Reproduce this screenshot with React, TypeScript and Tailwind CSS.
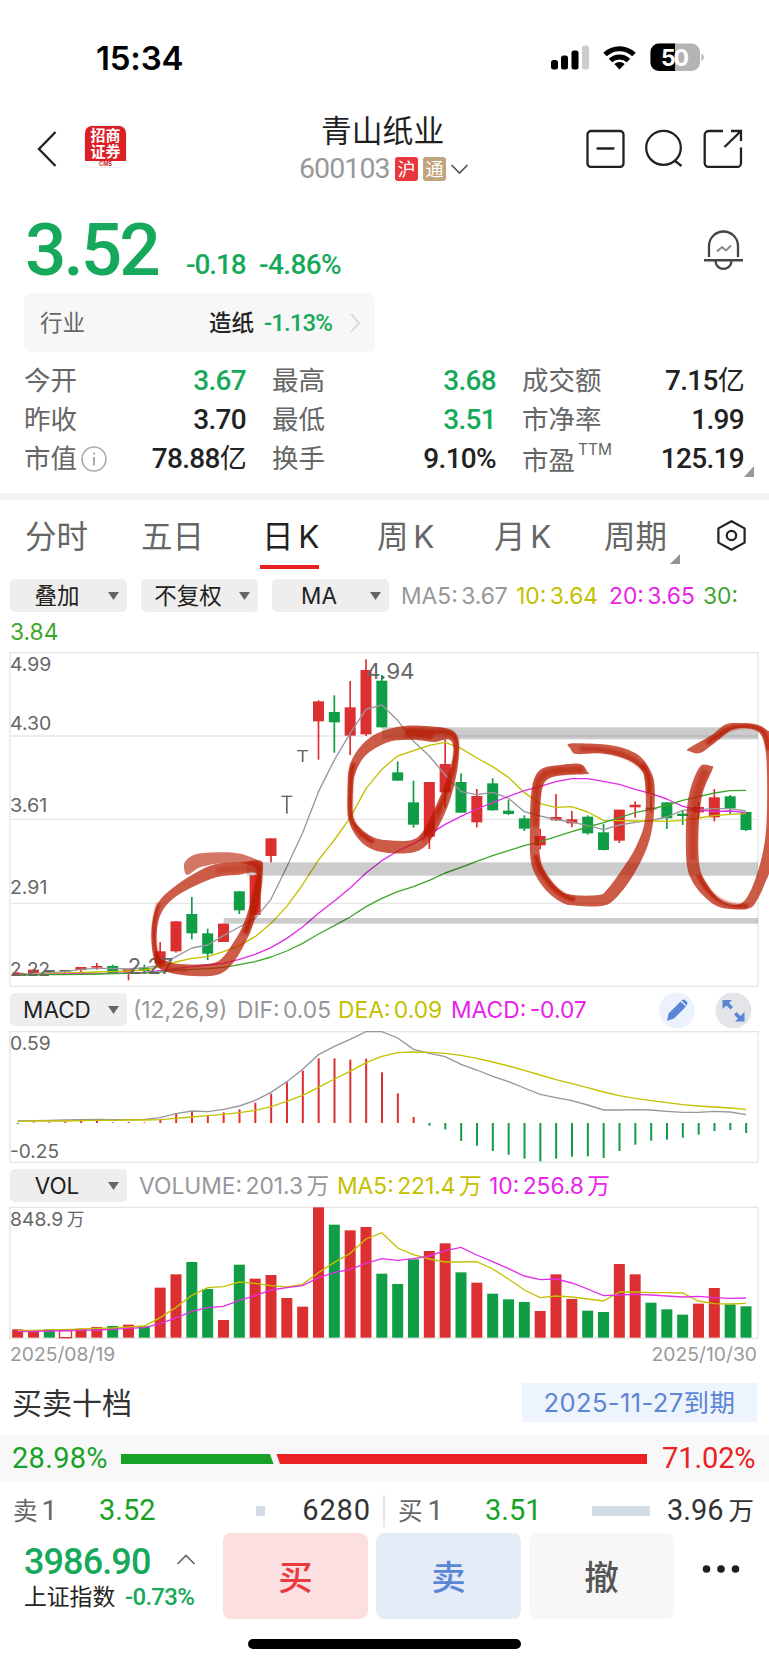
import React from 'react';

type Point = [number, number];
type Tone = 'r' | 'g' | 'n';
// body top, body bottom, high, low, tone
type Candle = [number, number, number, number, Tone];

const RED = '#dc2f31';
const GREEN = '#0f9d45';
const GRAY = '#97979a';
const YELLOW = '#c4c000';
const MAGENTA = '#e22ee6';
const MA_GREEN = '#3fa62c';

const toneColor: Record<Tone, string> = { r: RED, g: GREEN, n: '#666666' };

// Charts are drawn in @3x units
const cx = (i: number) => 53 + i * 47.5;

const line = (ys: number[]) => ys.map((y, i) => `${cx(i)},${y}`).join(' ');

// Catmull-Rom spline through a closed ring of points
const blob = (pts: Point[]) => {
  const n = pts.length;
  let d = `M${pts[0][0]} ${pts[0][1]}`;
  for (let i = 0; i < n; i++) {
    const p0 = pts[(i - 1 + n) % n];
    const p1 = pts[i];
    const p2 = pts[(i + 1) % n];
    const p3 = pts[(i + 2) % n];
    d += `C${p1[0] + (p2[0] - p0[0]) / 6} ${p1[1] + (p2[1] - p0[1]) / 6} ${p2[0] - (p3[0] - p1[0]) / 6} ${p2[1] - (p3[1] - p1[1]) / 6} ${p2[0]} ${p2[1]}`;
  }
  return d + 'Z';
};

const candles: Candle[] = [
  [998, 1008, 996, 1008, 'r'], [989, 1000, 987, 1000, 'r'], [990, 997, 990, 997, 'n'], [990, 995, 990, 1004, 'n'],
  [981, 990, 981, 996, 'r'], [978, 983, 969, 989, 'r'], [978, 999, 974, 999, 'g'], [987, 998, 987, 1021, 'r'],
  [983, 993, 974, 993, 'g'], [934, 972, 906, 985, 'r'], [844, 934, 844, 938, 'r'], [822, 880, 771, 898, 'g'],
  [880, 941, 866, 960, 'g'], [851, 906, 851, 906, 'r'], [754, 811, 754, 822, 'g'], [706, 825, 706, 825, 'r'],
  [595, 648, 595, 667, 'r'], [467, 471, 467, 521, 'n'], [330, 334, 330, 366, 'n'], [184, 244, 181, 359, 'r'],
  [216, 247, 166, 338, 'g'], [202, 287, 123, 345, 'r'], [90, 283, 58, 288, 'r'], [122, 262, 105, 262, 'g'],
  [397, 422, 364, 422, 'g'], [487, 554, 422, 563, 'g'], [426, 590, 426, 627, 'r'], [372, 457, 298, 503, 'r'],
  [426, 518, 400, 518, 'g'], [468, 547, 447, 562, 'r'], [430, 511, 415, 512, 'g'], [512, 522, 480, 525, 'g'],
  [535, 566, 526, 573, 'g'], [588, 616, 566, 628, 'r'], [531, 541, 462, 543, 'r'], [538, 550, 513, 562, 'r'],
  [530, 580, 526, 584, 'g'], [577, 630, 552, 631, 'g'], [509, 602, 509, 609, 'r'], [494, 502, 484, 533, 'r'],
  [503, 508, 468, 516, 'n'], [487, 535, 487, 567, 'g'], [521, 528, 513, 555, 'g'], [501, 517, 486, 533, 'r'],
  [472, 532, 447, 544, 'r'], [469, 505, 465, 522, 'g'], [516, 570, 516, 573, 'g'],
];

const ma5 = [1003, 1000, 998, 995, 988, 985, 985, 987, 983, 976, 950, 924, 915, 887, 861, 835, 778, 680, 578, 455, 360, 280, 208, 195, 241, 304, 348, 405, 455, 464, 457, 475, 515, 528, 539, 546, 557, 569, 555, 547, 541, 531, 511, 509, 506, 506, 513];
const ma10 = [1004, 1003, 1001, 999, 997, 996, 995, 993, 990, 980, 966, 955, 950, 935, 917, 890, 850, 799, 734, 660, 600, 533, 446, 388, 348, 332, 316, 307, 325, 354, 380, 412, 458, 491, 502, 500, 516, 541, 542, 543, 543, 544, 541, 534, 527, 523, 521];
const ma20 = [1004, 1004, 1003, 1002, 1001, 1001, 1000, 999, 997, 992, 986, 980, 975, 970, 958, 943, 923, 895, 861, 820, 783, 744, 699, 662, 633, 611, 583, 553, 529, 507, 488, 469, 452, 439, 425, 416, 416, 424, 433, 448, 461, 477, 499, 510, 514, 513, 518];
const ma30 = [1005, 1005, 1004, 1004, 1003, 1002, 1001, 1000, 999, 996, 991, 988, 986, 982, 974, 965, 951, 933, 910, 882, 857, 831, 800, 775, 755, 740, 721, 699, 682, 664, 647, 632, 617, 605, 590, 575, 561, 548, 533, 518, 508, 495, 481, 470, 459, 452, 451];

const macdBars = [432, 427, 427, 426, 423, 422, 427, 426, 427, 419, 401, 395, 405, 397, 388, 368, 341, 307, 272, 235, 235, 239, 236, 277, 340, 411, 437, 448, 483, 497, 513, 524, 536, 544, 536, 530, 529, 534, 513, 494, 482, 479, 473, 464, 453, 450, 459];
const dif = [423, 422, 421, 420, 419, 418, 419, 419, 418, 413, 401, 393, 395, 388, 378, 361, 337, 305, 268, 224, 199, 178, 155, 155, 174, 208, 220, 230, 253, 270, 289, 305, 324, 343, 353, 362, 375, 390, 390, 389, 390, 394, 397, 397, 394, 396, 404];
const dea = [424, 423, 423, 423, 422, 421, 421, 420, 420, 419, 415, 411, 407, 403, 398, 391, 380, 364, 346, 322, 297, 274, 248, 229, 218, 216, 217, 220, 226, 235, 246, 258, 271, 285, 299, 311, 323, 336, 347, 355, 362, 368, 374, 378, 381, 384, 388];

const volumes = [418, 422, 418, 422, 416, 411, 408, 404, 409, 293, 253, 216, 297, 390, 224, 266, 255, 324, 350, 52, 104, 121, 111, 251, 282, 208, 183, 160, 247, 278, 311, 328, 336, 363, 253, 327, 362, 366, 222, 253, 338, 358, 374, 341, 294, 343, 349];
const volTones = 'rrghrrgrgrrggrgrrrrrgrrgggrrgrgggrrrggrrgggrrgg';
const vol5 = [421, 421, 420, 419, 417, 415, 414, 411, 408, 383, 352, 316, 293, 290, 276, 280, 287, 291, 283, 248, 217, 190, 147, 128, 174, 194, 207, 216, 216, 215, 237, 267, 300, 323, 318, 321, 327, 333, 306, 306, 308, 308, 309, 333, 341, 342, 340];
const vol10 = [425, 424, 423, 422, 421, 420, 418, 415, 413, 401, 384, 364, 353, 349, 331, 317, 300, 293, 287, 263, 248, 238, 220, 206, 211, 206, 198, 182, 172, 195, 215, 236, 258, 269, 267, 279, 297, 317, 315, 313, 315, 318, 321, 319, 323, 325, 324];

// Hand-drawn marker rings
const ringPaths = [
  blob([[562, 705], [552, 682], [556, 664], [575, 648], [610, 639], [700, 638], [750, 650], [782, 668], [785, 690], [740, 672], [700, 670], [650, 671], [600, 682]]),
  blob([[782, 662], [720, 667], [645, 673], [590, 697], [530, 735], [480, 780], [460, 830], [454, 890], [460, 950], [478, 985], [530, 1003], [600, 1009], [660, 1002], [700, 968], [735, 910], [762, 845], [782, 760], [788, 690]]) +
    blob([[768, 699], [710, 705], [652, 711], [590, 735], [530, 768], [490, 808], [472, 860], [471, 930], [488, 960], [540, 972], [620, 972], [660, 960], [692, 920], [725, 865], [748, 800], [762, 740]]),
  blob([[1220, 257], [1170, 266], [1120, 286], [1077, 325], [1048, 380], [1043, 450], [1045, 535], [1070, 590], [1110, 625], [1160, 638], [1235, 638], [1280, 615], [1318, 555], [1350, 480], [1370, 400], [1377, 330], [1372, 290], [1350, 268], [1290, 259]]) +
    blob([[1303, 306], [1250, 300], [1190, 301], [1140, 317], [1095, 348], [1066, 400], [1059, 450], [1059, 530], [1080, 563], [1120, 592], [1165, 601], [1235, 600], [1270, 573], [1300, 515], [1332, 440], [1355, 370], [1360, 320], [1345, 298]]),
  blob([[1740, 372], [1680, 375], [1630, 384], [1603, 415], [1592, 480], [1590, 560], [1591, 650], [1605, 702], [1640, 753], [1690, 790], [1730, 797], [1810, 797], [1850, 772], [1900, 705], [1942, 620], [1960, 540], [1964, 440], [1950, 390], [1915, 345], [1850, 319], [1780, 311], [1707, 311], [1712, 327], [1729, 342], [1800, 340], [1870, 355], [1920, 385], [1935, 430], [1935, 540], [1908, 620], [1865, 690], [1820, 750], [1795, 765], [1720, 765], [1680, 750], [1640, 702], [1620, 650], [1619, 540], [1626, 450], [1645, 417], [1690, 406], [1762, 402], [1763, 396]]),
  blob([[2103, 377], [2080, 420], [2064, 480], [2058, 560], [2060, 670], [2075, 720], [2105, 762], [2150, 798], [2200, 808], [2248, 805], [2270, 782], [2295, 730], [2312, 670], [2322, 480], [2320, 300], [2300, 270], [2270, 254], [2225, 250], [2178, 253], [2135, 285], [2066, 325], [2068, 334], [2100, 339], [2145, 308], [2195, 270], [2240, 265], [2278, 278], [2295, 320], [2301, 400], [2300, 540], [2290, 630], [2265, 720], [2235, 780], [2200, 795], [2160, 780], [2120, 730], [2098, 675], [2096, 560], [2108, 460], [2138, 386], [2132, 378]]),
];

// Where the pen moved slowly the ink is denser
const inkTraces: { d: string; w: number; o: number }[] = [
  { d: 'M776 680C782 740 762 820 735 880', w: 16, o: 0.85 },
  { d: 'M775 682Q700 685 650 692', w: 18, o: 0.3 },
  { d: 'M488 978C455 930 456 850 476 790', w: 10, o: 0.75 },
  { d: 'M478 972Q500 990 560 989', w: 18, o: 0.3 },
  { d: 'M1215 279C1250 276 1285 280 1300 288', w: 28, o: 0.7 },
  { d: 'M1290 276C1370 268 1376 290 1367 350S1335 470 1312 520', w: 13, o: 0.75 },
  { d: 'M1062 370C1048 400 1050 500 1052 530C1070 575 1085 585 1120 606', w: 12, o: 0.8 },
  { d: 'M1320 500Q1300 560 1265 600', w: 20, o: 0.45 },
  { d: 'M1750 388C1650 390 1618 390 1610 450L1606 560', w: 20, o: 0.55 },
  { d: 'M1607 645C1620 710 1670 770 1725 779', w: 14, o: 0.8 },
  { d: 'M1740 326C1850 326 1900 350 1935 390', w: 15, o: 0.5 },
  { d: 'M1925 372Q1952 400 1948 460', w: 14, o: 0.75 },
  { d: 'M2118 390C2070 480 2080 580 2078 660', w: 22, o: 0.4 },
  { d: 'M2095 705C2130 780 2180 802 2244 798', w: 12, o: 0.8 },
  { d: 'M2120 310C2180 270 2190 258 2240 258S2300 280 2306 330', w: 12, o: 0.75 },
];

const font = 'font-["Inter","Noto_Sans_CJK_SC",sans-serif]';
const din = 'font-["Roboto","Noto_Sans_CJK_SC",sans-serif]';

const AxisText: React.FC<{ x: number; y: number; len: number; size?: number; children: React.ReactNode }> = ({ x, y, len, size = 56, children }) => (
  <text x={x} y={y} fontSize={size} textLength={len} lengthAdjust="spacingAndGlyphs" fill="#666" className={font}>
    {children}
  </text>
);

const KLineChart = () => (
  <svg className="block h-[352px] w-[769px]" viewBox="0 0 2307 1056">
    <defs>
      <filter id="ink" x="-10%" y="-10%" width="120%" height="120%">
        <feGaussianBlur stdDeviation="3.5" />
      </filter>
    </defs>
    <g stroke="#e6e6e6" strokeWidth="4" fill="none">
      <rect x="30" y="38" width="2244" height="1001" />
      <path d="M30 288H2274M30 538H2274M30 790H2274" />
    </g>
    {candles.map(([top, bottom, high, low, tone], i) => (
      <g key={i} fill={toneColor[tone]}>
        <rect x={cx(i) - 16.5} y={top} width="33" height={bottom - top} />
        <rect x={cx(i) - 2.5} y={high} width="5" height={low - high} />
      </g>
    ))}
    <g fill="none" strokeWidth="4" strokeLinejoin="round">
      <polyline points={line(ma5)} stroke={GRAY} />
      <polyline points={line(ma10)} stroke={YELLOW} />
      <polyline points={line(ma20)} stroke={MAGENTA} />
      <polyline points={line(ma30)} stroke={MA_GREEN} />
    </g>
    <AxisText x={30} y={94} len={124}>4.99</AxisText>
    <AxisText x={30} y={271} len={124}>4.30</AxisText>
    <AxisText x={30} y={516} len={112}>3.61</AxisText>
    <AxisText x={30} y={763} len={112}>2.91</AxisText>
    <AxisText x={30} y={1008} len={120}>2.22</AxisText>
    <AxisText x={1098} y={118} len={146} size={66}>4.94</AxisText>
    <AxisText x={383} y={1002} len={137} size={66}>2.27</AxisText>
    <g fill="#000" fillOpacity="0.2">
      <rect x="1146" y="262" width="1128" height="36" />
      <rect x="740" y="667" width="1534" height="40" />
      <rect x="671" y="834" width="1603" height="17" />
    </g>
    {ringPaths.map((d, i) => (
      <path key={i} d={d} fill="#b81c00" fillOpacity={i === 0 ? 0.6 : 0.72} fillRule="evenodd" />
    ))}
    <g fill="none" stroke="#b81c00" strokeLinejoin="round" filter="url(#ink)">
      {inkTraces.map((t) => (
        <path key={t.d} d={t.d} strokeWidth={t.w} strokeOpacity={t.o} />
      ))}
    </g>
  </svg>
);

const MacdChart = () => (
  <svg className="block h-[142px] w-[769px]" viewBox="0 138 2307 426">
    <rect x="30" y="155" width="2244" height="392" stroke="#e6e6e6" strokeWidth="4" fill="none" />
    {macdBars.map((y, i) => (
      <rect
        key={i}
        x={cx(i) - 2.5}
        y={Math.min(y, 429)}
        width="6"
        height={Math.abs(429 - y)}
        fill={y < 429 ? RED : GREEN}
      />
    ))}
    <polyline points={line(dif)} fill="none" stroke={GRAY} strokeWidth="4" />
    <polyline points={line(dea)} fill="none" stroke={YELLOW} strokeWidth="4" />
    <AxisText x={30} y={210} len={122}>0.59</AxisText>
    <AxisText x={30} y={534} len={147}>-0.25</AxisText>
  </svg>
);

const VolumeChart = () => (
  <svg className="block h-[138px] w-[769px]" viewBox="0 36 2307 414">
    <rect x="30" y="52" width="2244" height="393" stroke="#e6e6e6" strokeWidth="4" fill="none" />
    {volumes.map((y, i) =>
      volTones[i] === 'h' ? (
        <rect key={i} x={cx(i) - 17} y={y} width="36" height={443 - y} fill="#fff" stroke={RED} strokeWidth="4" />
      ) : (
        <rect key={i} x={cx(i) - 16.5} y={y} width="33" height={443 - y} fill={toneColor[volTones[i] as Tone]} />
      )
    )}
    <polyline points={line(vol5)} fill="none" stroke={YELLOW} strokeWidth="4" />
    <polyline points={line(vol10)} fill="none" stroke={MAGENTA} strokeWidth="4" />
    <AxisText x={30} y={108} len={160}>848.9</AxisText>
    <AxisText x={200} y={108} len={53} size={53}>万</AxisText>
  </svg>
);

const Chip: React.FC<{ label: string; className?: string }> = ({ label, className = '' }) => (
  <div className={`flex h-[33px] w-[117px] shrink-0 items-center rounded-[5px] bg-[#eeeeee] pr-2 text-[22.5px] leading-none text-[#222] ${className}`}>
    <span className="flex-1 whitespace-nowrap pr-[4px] pt-px text-center">{label}</span>
    <svg className="h-2 w-[11px] shrink-0" viewBox="0 0 11 8">
      <path d="M0 0H11L5.5 8Z" fill="#666" />
    </svg>
  </div>
);

const Stat: React.FC<{ label: React.ReactNode; value: string; green?: boolean }> = ({ label, value, green }) => (
  <div className="flex h-[39px] items-center justify-between">
    <span className="flex items-center text-[26.5px] text-[#666]">{label}</span>
    <span className={`${din} text-[28px] font-medium tracking-[-0.7px] ${green ? 'text-[#17a95b]' : 'text-[#222]'}`}>
      {value.replace('亿', '')}
      {value.includes('亿') && <span className="text-[27px] font-normal">亿</span>}
    </span>
  </div>
);

const StatusBar = () => (
  <div className="flex h-[100px] items-start pl-[96px] pt-[38px]">
    <span className="w-[455px] text-[33px] font-semibold leading-[40px] tracking-[-0.2px] text-black">15:34</span>
    <svg className="h-[40px] w-[156px]" viewBox="552 38 156 40">
      <rect x="552" y="60" width="7" height="9.5" rx="2.5" />
      <rect x="562" y="55.5" width="7" height="14" rx="2.5" />
      <rect x="572.5" y="50.5" width="7" height="19" rx="2.5" />
      <rect x="583" y="45.5" width="7" height="24" rx="2.5" fill="#ccc" />
      <g fill="none" stroke="#000" strokeWidth="5">
        <path d="M606 54.5a21 21 0 0 1 29 0" />
        <path d="M611.5 60.5a13 13 0 0 1 18 0" />
      </g>
      <path d="M620.5 69.5l-5.2-5.6a8 8 0 0 1 10.4 0Z" />
      <rect x="651.5" y="43.5" width="49.5" height="27.5" rx="8.5" fill="#b4b4b4" />
      <path d="M676 43.5H660A8.5 8.5 0 0 0 651.5 52V62.5A8.5 8.5 0 0 0 660 71H676Z" />
      <path d="M702.5 53.5c3 1 3 6.5 0 7.5Z" fill="#b4b4b4" />
      <text x="676" y="65.5" fontSize="23" fontWeight="700" textAnchor="middle" fill="#fff" textLength="28" className={font}>50</text>
    </svg>
  </div>
);

const Header = () => (
  <header className="flex h-[90px] items-start">
    <svg className="ml-[36px] mt-[30px] h-[38px] w-[22px]" viewBox="0 0 22 38" fill="none" stroke="#222" strokeWidth="2.4">
      <path d="M19.5 2L3 19L19.5 36" />
    </svg>
    <div className="ml-[26px] mt-[25px] h-[43px] w-[43px] overflow-hidden rounded-[8px] border border-[#eeeeee] bg-white text-center">
      <div className="h-[35px] bg-[#dc1f26] pt-[2px] text-[15px] font-bold leading-[15.5px] text-white">
        <div>招商</div>
        <div>证券</div>
      </div>
      <div className="text-[5.5px] font-bold leading-[6px] text-[#c8222a]">CMS</div>
    </div>
    <div className="ml-[172px] mt-[11px] w-[170px]">
      <div className="pl-[22px] text-[30.8px] leading-[40px] text-[#1f1f1f]">青山纸业</div>
      <div className="mt-[6px] flex h-[24px] items-center">
        <span className={`${din} w-[96px] text-[28.5px] leading-none tracking-[-0.9px] text-[#999]`}>600103</span>
        <span className="flex h-6 w-[23px] items-center justify-center rounded-[3px] bg-[#e8373d] text-[18px] text-white">沪</span>
        <span className="ml-[5px] flex h-6 w-[23px] items-center justify-center rounded-[3px] bg-[#c0a47c] text-[18px] text-white">通</span>
        <svg className="ml-[4px] h-3 w-[19px]" viewBox="0 0 19 12" fill="none" stroke="#555" strokeWidth="1.7">
          <path d="M1.5 2L9.5 10L17.5 2" />
        </svg>
      </div>
    </div>
    <svg className="ml-[117px] mt-[28px] h-[40px] w-[158px]" viewBox="587 128 158 40" fill="none" stroke="#222" strokeWidth="2.3">
      <rect x="588.5" y="131" width="36" height="36" rx="3.5" />
      <path d="M598.5 148.5H614.5" strokeLinecap="round" />
      <ellipse cx="664.5" cy="147.8" rx="17.3" ry="17" />
      <path d="M675.5 160.5L682.5 166" />
      <path d="M724 131H709.500A4 4 0 0 0 705.7 135V163A4 4 0 0 0 709.5 167H738A4 4 0 0 0 742 163V147.5" />
      <path d="M732 131H742V141M742 131L725.5 147" />
    </svg>
  </header>
);

const Quote = () => (
  <section className="h-[303px]">
    <div className={`flex h-[103px] items-start ${din}`}>
      <span className="ml-[25px] mt-[24px] w-[161px] whitespace-nowrap text-[73px] font-medium leading-[73px] tracking-[-3px] text-[#17a95b]">3.52</span>
      <span className="mt-[60px] w-[73px] text-[28px] font-medium leading-[29px] tracking-[-1.1px] text-[#17a95b]">-0.18</span>
      <span className="mt-[60px] w-[443px] text-[28px] font-medium leading-[29px] tracking-[-0.6px] text-[#17a95b]">-4.86%</span>
      <svg className="mt-[39px] h-[42px] w-[44px]" viewBox="702 229 44 42" fill="none" stroke="#444" strokeWidth="2.3">
        <path d="M709 257V246A14.5 14.5 0 0 1 738 246V257" />
        <path d="M704 260.3H743" strokeWidth="2.6" />
        <path d="M715.5 261C716 271.500 731 271.500 731.5 261" />
        <path d="M717 251.5L722 247L726 250.5L731 245.5" stroke="#888" strokeWidth="2" />
      </svg>
    </div>
    <div className="ml-6 flex h-[59px] w-[351px] items-center rounded-lg bg-[#f7f7f7] pl-4">
      <span className="w-[169px] text-[22.5px] text-[#666]">行业</span>
      <span className="w-[55px] text-[22.5px] font-medium text-[#222]">造纸</span>
      <span className={`${din} w-[86px] text-[24px] font-medium tracking-[-0.9px] text-[#17a95b]`}>-1.13%</span>
      <svg className="h-5 w-[10px]" viewBox="0 0 10 20" fill="none" stroke="#d8d8d8" strokeWidth="1.8">
        <path d="M1 1L9 10L1 19" />
      </svg>
    </div>
    <div className="flex pl-6 pt-[9px]">
      <div className="w-[222px]">
        <Stat label="今开" value="3.67" green />
        <Stat label="昨收" value="3.70" />
        <Stat
          label={
            <>
              市值
              <svg className="ml-[4px] h-[26px] w-[26px]" viewBox="0 0 26 26" fill="none" stroke="#aaa" strokeWidth="1.6">
                <circle cx="13" cy="13" r="12" />
                <path d="M13 11V19.5M13 6.5V8.5" strokeWidth="2" />
              </svg>
            </>
          }
          value="78.88亿"
        />
      </div>
      <div className="ml-[26px] w-[224px]">
        <Stat label="最高" value="3.68" green />
        <Stat label="最低" value="3.51" green />
        <Stat label="换手" value="9.10%" />
      </div>
      <div className="ml-[26px] w-[222px]">
        <Stat label="成交额" value="7.15亿" />
        <Stat label="市净率" value="1.99" />
        <Stat
          label={
            <>
              <span className="mt-1">市盈</span>
              <span className="mb-[18px] ml-[3px] text-[15.5px] leading-none">TTM</span>
            </>
          }
          value="125.19"
        />
      </div>
      <svg className="mt-[105px] h-[11px] w-[10px]" viewBox="0 0 10 11">
        <path d="M0 11H10V0Z" fill="#999" />
      </svg>
    </div>
  </section>
);

const tabs = [
  { label: '分时', width: 'w-[116px]' },
  { label: '五日', width: 'w-[121px]' },
  { label: '日 K', width: 'w-[115px]', active: true },
  { label: '周 K', width: 'w-[117px]' },
  { label: '月 K', width: 'w-[110px]' },
  { label: '周期', width: 'w-[66px]' },
];

const Tabs = () => (
  <nav className="flex h-[79px] pl-[25px]">
    {tabs.map((t) => (
      <div key={t.label} className={`shrink-0 ${t.width}`}>
        <div className={`flex h-[65px] items-start whitespace-nowrap pt-[14px] text-[31.5px] leading-[46px] [word-spacing:-4px] ${t.active ? 'text-[#222]' : 'text-[#666]'}`}>
          {t.label}
        </div>
        {t.active && <div className="ml-[-2px] h-1 w-[59px] bg-[#e82223]" />}
      </div>
    ))}
    <svg className="mt-[54px] h-[10px] w-[10px]" viewBox="0 0 10 10">
      <path d="M0 10H10V0Z" fill="#8f9499" />
    </svg>
    <svg className="ml-[36px] mt-[19px] h-[33px] w-[31px]" viewBox="0 0 31 33" fill="none" stroke="#222" strokeWidth="2.2">
      <path d="M15.5 2.2L28.6 9.4V23.6L15.5 30.8L2.4 23.6V9.4Z" strokeLinejoin="round" />
      <circle cx="15.5" cy="16.5" r="4.7" />
    </svg>
  </nav>
);

const legend = 'whitespace-nowrap text-[22.8px] leading-[34px] [word-spacing:-3px]';

export default function App() {
  return (
    <div className={`h-[1665px] w-[769px] overflow-hidden bg-white ${font}`}>
      <StatusBar />
      <Header />
      <Quote />
      <div className="h-[7px] bg-[#f4f4f4]" />
      <Tabs />

      {/* Moving averages legend */}
      <div className="flex h-[36px] items-start pl-[10px]">
        <Chip label="叠加" />
        <Chip label="不复权" className="ml-[14px]" />
        <Chip label="MA" className="ml-[14px]" />
        <span className={`${legend} ml-[12px] w-[115px]`} style={{ color: GRAY }}>MA5: 3.67</span>
        <span className={`${legend} w-[93px] text-[#c4c000]`}>10: 3.64</span>
        <span className={`${legend} w-[94px] text-[#e822ea]`}>20: 3.65</span>
        <span className={`${legend} text-[#3fa62c]`}>30:</span>
      </div>
      <div className={`${legend} h-[25px] pl-[10px] text-[#3fa62c]`}>3.84</div>
      <KLineChart />

      <div className="flex h-[34px] items-start pl-[10px] pt-px">
        <Chip label="MACD" />
        <span className={`${legend} ml-[6px] w-[104px] text-[#97979b]`}>(12,26,9)</span>
        <span className={`${legend} w-[101px] text-[#97979b]`}>DIF: 0.05</span>
        <span className={`${legend} w-[113px] text-[#c4c000]`}>DEA: 0.09</span>
        <span className={`${legend} w-[207px] text-[#e822ea]`}>MACD: -0.07</span>
        <svg className="-mt-px h-9 w-[95px] shrink-0" viewBox="659 991 95 36">
          <circle cx="677.7" cy="1009.5" r="18" fill="#ecf2fc" />
          <path d="M668 1020L669.5 1012.5L681.5 1000.5L687 1005.5L675 1017.5ZM683 999L685.5 998.5L688.5 1001.5L688 1004L687.5 1004.5L682.5 999.5Z" fill="#5b86d6" />
          <circle cx="734.5" cy="1009.5" r="18" fill="#e4e5e8" />
          <g fill="#5b86d6">
            <path d="M723.5 999H733L730 1002L734 1006L731.500 1008.500L727.500 1004.500L723.500 1008Z" />
            <path d="M745.500 1020.500H736L739 1017.500L735 1013.500L737.500 1011L741.500 1015L745.500 1011Z" />
          </g>
        </svg>
      </div>
      <MacdChart />

      <div className="flex h-[34px] items-start pl-[10px] pt-px">
        <Chip label="VOL" />
        <span className={`${legend} ml-[12px] w-[198px] text-[#97979b]`}>VOLUME: 201.3 万</span>
        <span className={`${legend} w-[152px] text-[#c4c000]`}>MA5: 221.4 万</span>
        <span className={`${legend} text-[#e822ea]`}>10: 256.8 万</span>
      </div>
      <VolumeChart />
      <div className="flex h-[43px] justify-between pl-[10px] pr-[12px] pt-[3px] text-[19.3px] leading-[23px] text-[#999]">
        <span>2025/08/19</span>
        <span>2025/10/30</span>
      </div>

      {/* Order book */}
      <div className="flex h-[52px] items-start justify-between pl-[12px] pr-[12px]">
        <h2 className="text-[30px] leading-[41px] text-[#333]">买卖十档</h2>
        <div className="h-[39px] w-[235px] whitespace-nowrap bg-[#eef4fb] text-center text-[25.5px] leading-[39px] tracking-[0.4px] text-[#5b86d6]">2025-11-27到期</div>
      </div>
      <div className={`flex h-[47px] items-center bg-[#f8f8f8] pl-[12px] ${din}`}>
        <span className="w-[109px] text-[29px] tracking-[0.3px] text-[#17a126]">28.98%</span>
        <svg className="h-[10px] w-[526px]" viewBox="0 0 526 10">
          <path d="M0 0H149L152.5 10H0Z" fill="#17a126" />
          <path d="M155.5 0H526V10H159Z" fill="#ea2224" />
        </svg>
        <span className="ml-[15px] text-[29px] tracking-[-0.1px] text-[#ea2224]">71.02%</span>
      </div>
      <div className={`flex h-[51px] items-center pl-[13px] pt-[6px] text-[29px] leading-none text-[#333] ${din}`}>
        <span className="w-[86px] whitespace-nowrap text-[24.5px] text-[#666]">卖<span className="ml-[4px] text-[28px]">1</span></span>
        <span className="w-[157px] text-[#17a126]">3.52</span>
        <span className="h-[10px] w-[9px] bg-[#d3dce5]" />
        <span className="w-[106px] text-right tracking-[0.9px]">6280</span>
        <span className="ml-[12px] h-[32px] w-[2px] bg-[#e6e6e6]" />
        <span className="ml-[13px] w-[87px] whitespace-nowrap text-[24.5px] text-[#666]">买<span className="ml-[5px] text-[28px]">1</span></span>
        <span className="w-[107px] text-[#17a126]">3.51</span>
        <span className="h-[10px] w-[58px] bg-[#d3dce5]" />
        <span className="w-[104px] whitespace-nowrap text-right">3.96<span className="ml-[5px] text-[25.5px]">万</span></span>
      </div>

      {/* Trade bar */}
      <footer className="flex h-[106px] items-start">
        <div className="w-[223px] pl-[24px] pt-[9px]">
          <div className="flex h-[39px] items-center">
            <span className={`${din} w-[152px] text-[36px] font-medium leading-[40px] tracking-[-0.9px] text-[#17a95b]`}>3986.90</span>
            <svg className="mb-1 h-[11px] w-[20px]" viewBox="0 0 20 11" fill="none" stroke="#666" strokeWidth="1.7">
              <path d="M1.5 10L10 1.5L18.5 10" />
            </svg>
          </div>
          <div className="flex h-[32px] items-center whitespace-nowrap">
            <span className="w-[101px] text-[22.8px] text-[#222]">上证指数</span>
            <span className={`${din} text-[24px] font-medium tracking-[-0.7px] text-[#17a95b]`}>-0.73%</span>
          </div>
        </div>
        <button className="h-[86px] w-[145px] rounded-lg bg-[#fce0e1] pt-[3px] text-[34.5px] font-medium text-[#e93a40]">买</button>
        <button className="ml-[8px] h-[86px] w-[145px] rounded-lg bg-[#e5ecf8] pt-[3px] text-[34.5px] font-medium text-[#5b86d6]">卖</button>
        <button className="ml-[8px] h-[86px] w-[145px] rounded-lg bg-[#f7f7f7] pt-[3px] text-[34.5px] font-medium text-[#555]">撤</button>
        <svg className="ml-[28px] mt-[32px] h-2 w-[38px]" viewBox="0 0 38 8" fill="#1f1f1f">
          <circle cx="4.5" cy="4" r="3.8" />
          <circle cx="19" cy="4" r="3.8" />
          <circle cx="33.5" cy="4" r="3.8" />
        </svg>
      </footer>
      <div className="ml-[248px] h-[10px] w-[273px] rounded-full bg-black" />
    </div>
  );
}
